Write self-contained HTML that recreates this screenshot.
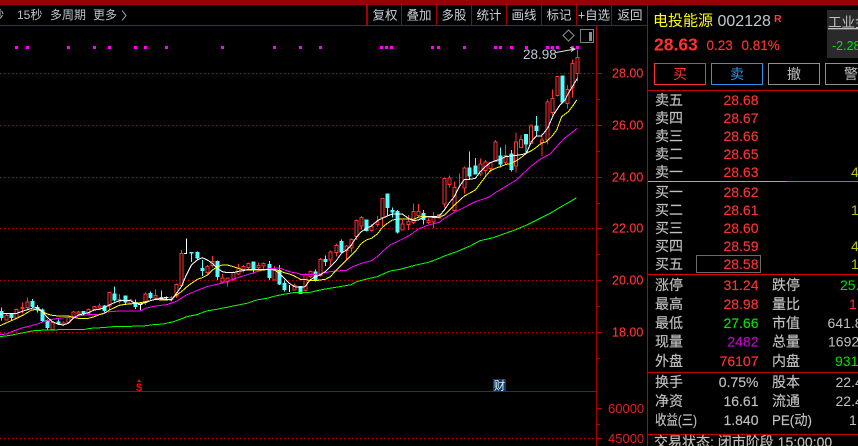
<!DOCTYPE html>
<html><head><meta charset="utf-8"><style>
html,body{margin:0;padding:0;background:#000;width:858px;height:446px;overflow:hidden}
svg{display:block;font-family:"Liberation Sans","Noto Sans CJK SC",sans-serif}
.l{font-size:14px;fill:#c0c0c0;stroke:#c0c0c0;stroke-width:.15px}
.t{font-size:12px;fill:#b8c4cc}
.b{font-size:12.5px;fill:#c8d0d8;text-anchor:middle}
.p{font-size:14px;fill:#ff3232;stroke:#ff3232;stroke-width:.15px;text-anchor:end}
.v{font-size:14px;fill:#c0c0c0;stroke:#c0c0c0;stroke-width:.15px;text-anchor:end}
.a{font-size:12.5px;fill:#ff3232;stroke:#ff3232;stroke-width:.15px}
.n{fill:none;stroke-width:3;shape-rendering:crispEdges}
.w{fill:none;stroke:#ff3232;stroke-width:3;shape-rendering:crispEdges}
.h{fill:#000;stroke:#ff3232;stroke-width:3;shape-rendering:crispEdges}
.wc{fill:none;stroke:#55ffff;stroke-width:3;shape-rendering:crispEdges}
.c{fill:#55ffff;stroke:#55ffff;stroke-width:3;shape-rendering:crispEdges}
.ww{fill:none;stroke:#fff;stroke-width:3;shape-rendering:crispEdges}
</style></head><body>
<svg width="858" height="446" viewBox="0 0 858 446" xmlns="http://www.w3.org/2000/svg">
<rect width="858" height="446" fill="#000"/>
<rect width="858" height="5" fill="#990008"/>
<g shape-rendering="crispEdges">
<rect x="0" y="25" width="647" height="1" fill="#a80000"/>
<rect x="367" y="5" width="1" height="20" fill="#a80000"/>
<rect x="366" y="5" width="1" height="20" fill="#a80000"/>
<rect x="401" y="5" width="1" height="20" fill="#a80000"/>
<rect x="436" y="5" width="1" height="20" fill="#a80000"/>
<rect x="471" y="5" width="1" height="20" fill="#a80000"/>
<rect x="506" y="5" width="1" height="20" fill="#a80000"/>
<rect x="541" y="5" width="1" height="20" fill="#a80000"/>
<rect x="576" y="5" width="1" height="20" fill="#a80000"/>
<rect x="611" y="5" width="1" height="20" fill="#a80000"/>
<rect x="647" y="5" width="1" height="441" fill="#c00000"/>
<rect x="596" y="25" width="1" height="421" fill="#a80000"/>
<rect x="0" y="391" width="597" height="1" fill="#a80000"/>
<path d="M597 73.5h5M597 125.5h5M597 177.5h5M597 228.5h5M597 280.5h5M597 332.5h5M597 99.5h3M597 151.5h3M597 203.5h3M597 254.5h3M597 306.5h3M597 358.5h3M597 408.5h5M597 424.5h3M597 438.5h5" stroke="#c00000" fill="none"/>
<path d="M0 73.5H596M0 125.5H596M0 177.5H596M0 228.5H596M0 280.5H596M0 332.5H596M0 438.5H596" stroke="#c80000" stroke-dasharray="1 3" fill="none"/>
<path d="M15 46h3v3h-3zM26 46h3v3h-3zM67 46h3v3h-3zM93 46h3v3h-3zM108 46h3v3h-3zM134 46h3v3h-3zM144 46h3v3h-3zM165 46h3v3h-3zM221 46h3v3h-3zM273 46h3v3h-3zM299 46h3v3h-3zM319 46h3v3h-3zM380 46h3v3h-3zM385 46h3v3h-3zM390 46h3v3h-3zM431 46h3v3h-3zM437 46h3v3h-3zM463 46h3v3h-3zM494 46h3v3h-3zM499 46h3v3h-3zM510 46h3v3h-3zM525 46h3v3h-3zM546 46h3v3h-3zM551 46h3v3h-3zM556 46h3v3h-3zM571 46h3v3h-3zM576 46h3v3h-3z" fill="#ff00ff"/>
</g>

<!-- candles left -->
<g transform="translate(0,230) scale(.33333)">
<path class="w" d="M19 252V270M49 235V265M67 218V250M83 202V238M157 275V300M190 275V288M205 258V280M220 243V265M235 243V258M265 235V252M283 228V242M298 220V240M328 186V240M358 192V220M391 207V224M436 188V225M466 178V208M514 198V214M529 160V204M544 60V168M622 105V132M637 78V112M667 132V160M682 142V170M700 125V152M715 102V135M730 105V128M745 98V118M775 98V122M790 98V120M823 108V152M883 160V182"/>
<path class="wc" d="M4 232V272M34 250V270M97 207V235M112 225V248M127 235V275M142 268V298M175 268V285M250 243V258M313 225V248M343 170V214M376 198V224M406 208V237M451 184V208M484 182V212M574 67V96M592 65V90M607 90V138M652 92V150M760 96V130M808 93V150M838 105V165M853 152V185M901 168V192"/>
<path class="ww" d="M421 222V240M499 200V212M559 25V72M868 165V186M414 223h14M492 203h14M552 71h7"/>
<path class="h" d="M19 256h4.500V270h-9V256zM49 238h4.500V264h-9V238zM67 232h4.500V236h-9V232zM83 216h4.500V232h-9V216zM157 278h4.500V298h-9V278zM190 279h4.500V284h-9V279zM205 262h4.500V278h-9V262zM220 246h4.500V262h-9V246zM235 246h4.500V252h-9V246zM265 238h4.500V250h-9V238zM283 230h4.500V238h-9V230zM298 228h4.500V234h-9V228zM328 187h4.500V228h-9V187zM358 208h4.500V214h-9V208zM391 210h4.500V220h-9V210zM436 192h4.500V218h-9V192zM466 196h4.500V204h-9V196zM514 203h4.500V208h-9V203zM529 164h4.500V198h-9V164zM544 70h4.500V166h-9V70zM622 110h4.500V128h-9V110zM637 95h4.500V106h-9V95zM667 144h4.500V156h-9V144zM682 144h4.500V156h-9V144zM700 128h4.500V150h-9V128zM715 114h4.500V132h-9V114zM730 110h4.500V118h-9V110zM745 100h4.500V112h-9V100zM775 106h4.500V112h-9V106zM790 100h4.500V108h-9V100zM823 118h4.500V150h-9V118zM883 166h4.500V180h-9V166z"/>
<path class="c" d="M4 244h4.500V262h-9V244zM34 254h4.500V262h-9V254zM97 214h4.500V230h-9V214zM112 232h4.500V240h-9V232zM127 240h4.500V272h-9V240zM142 272h4.500V292h-9V272zM175 276h4.500V280h-9V276zM250 244h4.500V250h-9V244zM313 228h4.500V242h-9V228zM343 192h4.500V210h-9V192zM376 198h4.500V216h-9V198zM406 218h4.500V230h-9V218zM451 190h4.500V202h-9V190zM484 202h4.500V208h-9V202zM574 67h4.500V69h-9V67zM592 68h4.500V84h-9V68zM607 115h4.500V122h-9V115zM652 94h4.500V140h-9V94zM760 96h4.500V118h-9V96zM808 104h4.500V142h-9V104zM838 122h4.500V162h-9V122zM853 160h4.500V178h-9V160zM901 170h4.500V190h-9V170z"/>
</g>
<!-- candles middle -->
<g transform="translate(300,130) scale(.33333)">
<path class="w" d="M16 430V484M31 422V444M61 384V440M91 362V406M109 340V380M139 345V390M154 325V368M169 268V330M184 258V298M214 282V304M232 258V290M247 204V288M307 270V302M325 255V300M340 220V282M355 222V262M385 258V282M400 246V294M418 252V266M433 142V232M448 136V172M463 155V244M478 130V172M493 110V190M541 85V138M556 90V142M571 96V128M586 30V96M616 44V104"/>
<path class="wc" d="M46 418V455M76 376V408M124 328V370M199 270V305M262 192V260M277 232V262M292 240V310M370 240V284M508 64V150M526 84V134M601 52V112M634 60V124"/>
<path class="h" d="M16 434h4.500V482h-9V434zM31 424h4.500V440h-9V424zM61 388h4.500V436h-9V388zM91 366h4.500V390h-9V366zM109 346h4.500V368h-9V346zM139 348h4.500V362h-9V348zM154 328h4.500V354h-9V328zM169 272h4.500V320h-9V272zM184 262h4.500V288h-9V262zM214 290h4.500V302h-9V290zM232 276h4.500V284h-9V276zM247 206h4.500V262h-9V206zM307 282h4.500V300h-9V282zM325 274h4.500V284h-9V274zM340 244h4.500V278h-9V244zM355 244h4.500V256h-9V244zM385 272h4.500V278h-9V272zM400 262h4.500V276h-9V262zM418 254h4.500V264h-9V254zM433 146h4.500V222h-9V146zM448 144h4.500V164h-9V144zM463 172h4.500V242h-9V172zM493 114h4.500V174h-9V114zM541 102h4.500V132h-9V102zM556 96h4.500V122h-9V96zM571 98h4.500V116h-9V98zM586 36h4.500V94h-9V36zM616 76h4.500V98h-9V76z"/>
<path class="c" d="M46 426h4.500V452h-9V426zM76 388h4.500V394h-9V388zM124 334h4.500V366h-9V334zM199 270h4.500V302h-9V270zM262 192h4.500V232h-9V192zM277 242h4.500V246h-9V242zM292 244h4.500V306h-9V244zM370 250h4.500V268h-9V250zM508 114h4.500V138h-9V114zM526 108h4.500V132h-9V108zM601 78h4.500V102h-9V78zM634 72h4.500V118h-9V72z"/>
</g>
<!-- candles top -->
<g transform="translate(330,0) scale(.33333)">
<path class="w" d="M558 398V518M573 405V444M603 372V430M636 400V468M652 298V433M668 268V345M683 228V290M712 255V325M727 178V292M743 148V245"/>
<path class="wc" d="M588 402V462M620 348V408M697 226V310"/>
<path class="h" d="M558 426h4.500V498h-9V426zM573 418h4.500V442h-9V418zM603 378h4.500V430h-9V378zM636 420h4.500V428h-9V420zM652 306h4.500V420h-9V306zM668 296h4.500V338h-9V296zM683 230h4.500V286h-9V230zM712 268h4.500V310h-9V268zM727 190h4.500V264h-9V190zM743 172h4.500V220h-9V172z"/>
<path class="c" d="M588 404h4.500V432h-9V404zM620 378h4.500V392h-9V378zM697 228h4.500V306h-9V228z"/>
</g>

<!-- MA lines -->
<g transform="translate(0,230) scale(.33333)">
<polyline class="n" stroke="#00ff00" points="0,320 30,316 60,310 90,304 112,301 157,300 200,298 255,298 270,295 305,293 340,290 430,288 460,284 490,282 520,275 540,268 560,260 590,254 620,243 650,238 680,232 710,226 740,220 770,210 800,205 830,197 850,193 880,188 901,188"/>
<polyline class="n" stroke="#ff00ff" points="0,314 20,312 40,303 65,294 90,288 112,282 127,276 142,272 157,268 175,265 205,262 235,258 265,254 298,253 328,245 358,243 391,243 421,243 436,235 466,228 500,224 529,214 559,195 590,182 620,170 650,163 680,155 700,147 730,138 760,128 790,120 808,116 838,114 868,125 901,132"/>
<polyline class="n" stroke="#ffff00" points="0,287 20,278 50,265 70,255 95,240 112,238 127,245 142,252 157,256 175,258 190,258 205,258 220,262 235,265 250,265 265,265 283,260 298,254 313,250 328,240 343,233 358,226 376,223 391,222 406,220 421,218 436,215 451,212 466,208 484,210 499,210 514,208 529,195 544,185 559,172 574,160 592,148 607,143 622,135 637,120 652,110 667,105 682,105 700,110 715,115 730,120 745,120 760,120 775,120 790,120 808,118 823,118 838,122 853,128 868,132 883,138 901,148"/>
<polyline class="n" stroke="#ffffff" points="0,252 20,250 50,250 70,243 95,235 112,232 127,245 142,262 157,275 175,283 190,285 205,280 220,265 235,255 250,252 265,248 283,240 298,238 313,233 328,225 343,218 358,212 376,212 391,212 406,220 421,222 436,218 451,212 466,208 484,205 499,208 514,210 529,190 544,170 559,135 574,105 592,90 607,83 622,90 637,100 652,115 667,125 682,128 700,128 715,124 730,122 745,118 760,118 775,118 790,118 808,118 823,120 838,130 853,145 868,160 883,170 901,172"/>
</g>
<g transform="translate(300,130) scale(.33333)">
<polyline class="n" stroke="#00ff00" points="0,488 30,487 60,480 100,473 154,464 170,455 200,447 232,440 247,433 270,423 300,418 340,407 385,397 418,385 433,378 470,365 510,348 540,332 580,323 610,312 650,298 680,285 720,265 750,250 780,232 810,215 830,203"/>
<polyline class="n" stroke="#ff00ff" points="0,433 20,434 60,432 90,425 109,423 139,421 154,412 184,400 214,392 232,380 247,365 270,345 292,335 325,318 340,308 355,297 385,285 418,277 433,265 463,247 493,232 526,215 570,200 586,188 616,170 649,150 670,130 694,108 720,88 750,72 770,50 790,28 810,12 825,0"/>
<polyline class="n" stroke="#ffff00" points="0,448 15,448 30,452 46,452 60,450 76,448 91,440 109,420 124,405 139,390 154,375 169,360 184,340 199,330 214,325 232,312 247,292 262,280 277,270 292,268 307,267 325,267 340,268 355,262 370,258 385,260 400,262 418,262 433,255 448,240 463,225 478,212 493,198 508,190 526,180 541,160 556,140 571,122 586,115 601,110 616,104 634,100 649,92 664,82 679,70 694,62 709,52 724,40 739,35 755,20 770,0"/>
<polyline class="n" stroke="#ffffff" points="0,472 15,470 30,450 46,440 60,435 76,425 91,410 109,392 124,370 139,360 154,345 169,322 184,305 199,295 214,288 232,272 247,265 262,258 277,252 292,252 307,252 325,265 340,272 355,270 370,262 385,260 400,260 418,258 433,240 448,218 463,200 478,170 493,148 508,148 526,145 541,125 556,110 571,98 586,92 601,88 616,80 634,78 649,76 664,74 679,70 694,35 709,18 724,18 739,0"/>
</g>
<g transform="translate(330,0) scale(.33333)">
<polyline class="n" stroke="#ff00ff" points="735,390 740,385"/>
<polyline class="n" stroke="#ffff00" points="680,390 695,350 715,335 730,315 740,300"/>
<polyline class="n" stroke="#ffffff" points="649,390 655,380 670,345 690,315 705,300 715,280 730,255 742,235"/>
</g>

<!-- high label -->
<text x="523" y="59" font-size="13.5" fill="#c0c8d0">28.98</text>
<path d="M556 52.500L575 49M570 47.500L575 49L571 51.500" stroke="#e0e0e0" fill="none"/>
<path d="M568.500 30L574 35.500L568.500 41L563 35.500Z" stroke="#909090" fill="none"/>
<rect x="580.500" y="29.500" width="13" height="13" stroke="#808080" fill="none" shape-rendering="crispEdges"/>
<rect x="589" y="32" width="3" height="9" fill="#909090"/>

<!-- toolbar text -->
<text class="t" x="-8" y="19">秒</text>
<text class="t" x="17" y="19">15秒</text>
<text class="t" x="50" y="19">多周期</text>
<text class="t" x="93" y="19">更多</text>
<path d="M122 10.500L126 15.500L122 20.500" stroke="#90b0c8" fill="none"/>
<text class="b" x="385" y="19.500">复权</text>
<text class="b" x="419" y="19.500">叠加</text>
<text class="b" x="454" y="19.500">多股</text>
<text class="b" x="489" y="19.500">统计</text>
<text class="b" x="524" y="19.500">画线</text>
<text class="b" x="559" y="19.500">标记</text>
<text class="b" x="594" y="19.500">+自选</text>
<text class="b" x="630" y="19.500">返回</text>

<!-- axis labels -->
<text class="a" x="612" y="77.500">28.00</text>
<text class="a" x="612" y="129.500">26.00</text>
<text class="a" x="612" y="181.500">24.00</text>
<text class="a" x="612" y="232.500">22.00</text>
<text class="a" x="612" y="284.500">20.00</text>
<text class="a" x="612" y="336.500">18.00</text>
<text x="608" y="413" font-size="13" fill="#e02020">60000</text>
<text x="608" y="443" font-size="13" fill="#e02020">45000</text>

<!-- markers -->
<path d="M139 379l2 3h-4z" fill="#ff0000"/>
<text x="139" y="391" font-size="11" font-weight="bold" fill="#ff0000" text-anchor="middle">$</text>
<rect x="493" y="379" width="13" height="12" fill="#0a3a70"/>
<text x="499.500" y="389.500" font-size="11.500" fill="#e8f0f8" text-anchor="middle">财</text>

<!-- right header -->
<text x="653" y="25.500" font-size="15" fill="#ffff00">电投能源</text>
<text x="717.500" y="26" font-size="16" fill="#c0c8d0">002128</text>
<text x="774" y="22" font-size="10.500" font-weight="bold" fill="#ff3c3c">R</text>
<rect x="827" y="10" width="31" height="48" fill="#2a2a2a"/>
<text x="828" y="27" font-size="13.500" fill="#c0c0c0" text-decoration="underline">工业金</text>
<text x="832" y="50" font-size="12.500" fill="#00e000">-2.28</text>
<text x="654" y="50.500" font-size="17.500" font-weight="bold" fill="#ff3232">28.63</text>
<text x="706.500" y="50" font-size="13.500" fill="#ff3232" stroke="#ff3232" stroke-width=".15">0.23</text>
<text x="741.500" y="50" font-size="13.500" fill="#ff3232" stroke="#ff3232" stroke-width=".15">0.81%</text>
<g fill="none" shape-rendering="crispEdges">
<rect x="654.500" y="63.500" width="51" height="21" stroke="#ff3232"/>
<rect x="711.500" y="63.500" width="51" height="21" stroke="#3090e8"/>
<rect x="768.500" y="63.500" width="51" height="21" stroke="#909090"/>
<rect x="825.500" y="63.500" width="51" height="21" stroke="#909090"/>
</g>
<text x="680" y="79" font-size="14" fill="#ff3232" text-anchor="middle">买</text>
<text x="737" y="79" font-size="14" fill="#3090e8" text-anchor="middle">卖</text>
<text x="794" y="79" font-size="14" fill="#c0c0c0" text-anchor="middle">撤</text>
<text x="851" y="79" font-size="14" fill="#c0c0c0" text-anchor="middle">警</text>

<g shape-rendering="crispEdges">
<rect x="648" y="90" width="210" height="1" fill="#c80000"/>
<rect x="648" y="181" width="138" height="1" fill="#e0a040"/>
<rect x="786" y="181" width="72" height="1" fill="#3a90d8"/>
<rect x="648" y="274" width="210" height="1" fill="#d80000"/>
<rect x="648" y="372" width="210" height="1" fill="#c80000"/>
<rect x="648" y="434" width="210" height="1" fill="#c80000"/>
<rect x="696.500" y="255.500" width="64" height="17" fill="none" stroke="#6a6a6a"/>
</g>

<!-- order book -->
<text class="l" x="655" y="105">卖五</text><text class="p" x="758.500" y="105">28.68</text>
<text class="l" x="655" y="123">卖四</text><text class="p" x="758.500" y="123">28.67</text>
<text class="l" x="655" y="141">卖三</text><text class="p" x="758.500" y="141">28.66</text>
<text class="l" x="655" y="159">卖二</text><text class="p" x="758.500" y="159">28.65</text>
<text class="l" x="655" y="177">卖一</text><text class="p" x="758.500" y="177">28.63</text>
<text x="851" y="177" font-size="14" fill="#c0c000">4</text>
<text class="l" x="655" y="197">买一</text><text class="p" x="758.500" y="197">28.62</text>
<text class="l" x="655" y="215">买二</text><text class="p" x="758.500" y="215">28.61</text>
<text x="851" y="215" font-size="14" fill="#c0c000">1</text>
<text class="l" x="655" y="233">买三</text><text class="p" x="758.500" y="233">28.60</text>
<text class="l" x="655" y="251">买四</text><text class="p" x="758.500" y="251">28.59</text>
<text x="851" y="251" font-size="14" fill="#c0c000">4</text>
<text class="l" x="655" y="269">买五</text><text class="p" x="758.500" y="269">28.58</text>
<text x="851" y="269" font-size="14" fill="#c0c000">1</text>

<!-- stats -->
<text class="l" x="655" y="290">涨停</text><text class="p" x="758.500" y="290">31.24</text>
<text class="l" x="772" y="290">跌停</text><text x="840" y="290" font-size="14" fill="#00e000">25.</text>
<text class="l" x="655" y="309">最高</text><text class="p" x="758.500" y="309">28.98</text>
<text class="l" x="772" y="309">量比</text><text x="849" y="309" font-size="14" fill="#ff3232">1.</text>
<text class="l" x="655" y="328">最低</text><text class="p" x="758.500" y="328" style="fill:#00e000;stroke:#00e000">27.66</text>
<text class="l" x="772" y="328">市值</text><text x="827.500" y="328" font-size="14" fill="#c0c0c0">641.8</text>
<text class="l" x="655" y="346.500">现量</text><text class="p" x="758.500" y="346.500" style="fill:#c000c8;stroke:#c000c8">2482</text>
<text class="l" x="772" y="346.500">总量</text><text x="828" y="346.500" font-size="14" fill="#c0c0c0">1692</text>
<text class="l" x="655" y="366">外盘</text><text class="p" x="758.500" y="366">76107</text>
<text class="l" x="772" y="366">内盘</text><text x="835" y="366" font-size="14" fill="#00e000">931</text>
<text class="l" x="655" y="387">换手</text><text class="v" x="758.500" y="387">0.75%</text>
<text class="l" x="772" y="387">股本</text><text x="835.500" y="387" font-size="14" fill="#c0c0c0">22.4</text>
<text class="l" x="655" y="406">净资</text><text class="v" x="758.500" y="406">16.61</text>
<text class="l" x="772" y="406">流通</text><text x="835.500" y="406" font-size="14" fill="#c0c0c0">22.4</text>
<text class="l" x="655" y="425" textLength="42" lengthAdjust="spacingAndGlyphs">收益(三)</text><text class="v" x="758.500" y="425">1.840</text>
<text class="l" x="772" y="425" textLength="40" lengthAdjust="spacingAndGlyphs">PE(动)</text><text x="849" y="425" font-size="14" fill="#c0c0c0">1</text>
<text class="l" x="654" y="447">交易状态: 闭市阶段 15:00:00</text>
</svg>
</body></html>
